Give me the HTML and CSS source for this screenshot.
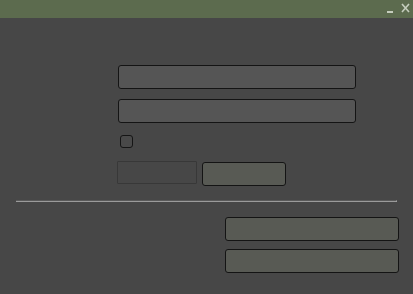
FILE: index.html
```html
<!DOCTYPE html>
<html>
<head>
<meta charset="utf-8">
<link rel="stylesheet" href="styles.css">
</head>
<body>
<div class="window">
  <div class="titlebar">
    <span class="tb-btn tb-min"></span>
    <svg class="tb-close" width="9" height="10" viewBox="0 0 9 10"><path d="M1 1 L8 9 M8 1 L1 9" stroke="#c5cdbd" stroke-width="1.6" fill="none"/></svg>
  </div>
  <div class="content">
    <div class="form">
      <div class="field"></div>
      <div class="field"></div>
      <div class="check"></div>
      <div class="btn-row">
        <div class="btn btn-disabled"></div>
        <div class="btn btn-small"></div>
      </div>
    </div>
    <div class="separator"></div>
    <div class="actions">
      <div class="btn btn-wide"></div>
      <div class="btn btn-wide"></div>
    </div>
  </div>
</div>
</body>
</html>
```

FILE: styles.css
```css
html, body {
  margin: 0;
  padding: 0;
  background: #474747;
  font-family: "Liberation Sans", sans-serif;
}
.window {
  width: 413px;
  height: 294px;
  display: flex;
  flex-direction: column;
  background: #474747;
}
.titlebar {
  height: 18px;
  background: #5c6b4e;
  display: flex;
  align-items: center;
  justify-content: flex-end;
  padding-right: 3px;
  gap: 8px;
}
.tb-min {
  width: 6px;
  height: 2px;
  background: #c5cdbd;
  margin-top: 6px;
}
.tb-close {
  display: block;
  margin-top: -2px;
}
.content {
  display: flex;
  flex-direction: column;
  padding: 47px 0 0 0;
}
.form {
  display: flex;
  flex-direction: column;
  padding-left: 118px;
}
.field {
  width: 236px;
  height: 22px;
  background: #555555;
  border: 1px solid #141414;
  border-radius: 3px;
  margin-bottom: 10px;
}
.check {
  width: 11px;
  height: 11px;
  border: 1px solid #151515;
  border-radius: 3px;
  background: #494949;
  margin: 2px 0 0 2px;
}
.btn-row {
  display: flex;
  align-items: flex-start;
  gap: 5px;
  margin-top: 13px;
  margin-left: -1px;
}
.btn {
  background: #585a54;
  border: 1px solid #141414;
  border-radius: 3px;
  box-sizing: border-box;
}
.btn-disabled {
  width: 80px;
  height: 23px;
  background: #474747;
  border: 1px solid #383838;
  border-radius: 1px;
}
.btn-small {
  width: 84px;
  height: 24px;
  margin-top: 1px;
}
.separator {
  margin: 14px 16px 0 16px;
  height: 2px;
  border-top: 1px solid #5a5a5a;
  background: #9b9b9b;
  height: 1px;
  border-right: 1px solid #a0a0a0;
}
.actions {
  display: flex;
  flex-direction: column;
  align-items: flex-end;
  gap: 8px;
  padding-right: 14px;
  margin-top: 15px;
}
.btn-wide {
  width: 174px;
  height: 24px;
}
```
